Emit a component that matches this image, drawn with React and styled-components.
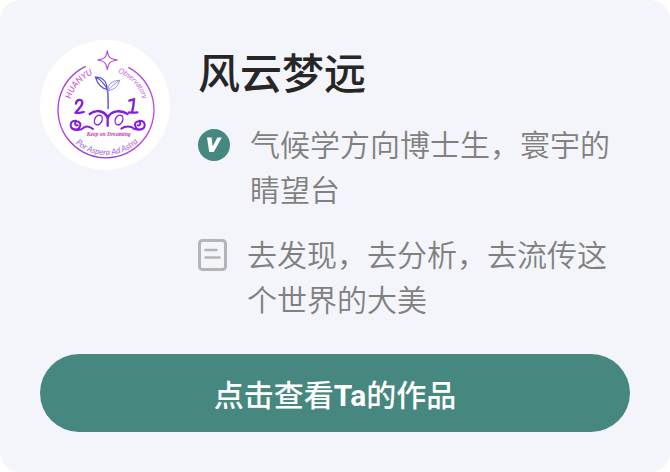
import styled, { createGlobalStyle } from 'styled-components';

const profile = {
    name: '风云梦远',
    title: '气候学方向博士生，寰宇的睛望台',
    bio: '去发现，去分析，去流传这个世界的大美',
};

export default function App(){
    return(
        <>
            <GlobalStyle/>
            <Card>
                <Profile>
                    <Avatar>
                        <Logo/>
                    </Avatar>
                    <Info>
                        <Name>{profile.name}</Name>
                        <Row>
                            <Verified/>
                            <Text>{profile.title}</Text>
                        </Row>
                        <Row>
                            <Note/>
                            <Text>{profile.bio}</Text>
                        </Row>
                    </Info>
                </Profile>
                <Button type="button">点击查看<b>Ta</b>的作品</Button>
            </Card>
        </>
    );
};

function Verified(){
    return(
        <Icon width="32" height="32" viewBox="0 0 32 32" aria-hidden="true">
            <circle cx="16" cy="16" r="16" fill="#46877f"/>
            <path d="M9 8.5h4.6l1 9L19.4 8.5h4.4l-8 14.5h-4.6z" fill="#fff"/>
        </Icon>
    );
}

function Note(){
    return(
        <Icon width="29" height="32" viewBox="0 0 29 32" fill="none" stroke="#b5b5b5" strokeWidth="3" strokeLinecap="round" aria-hidden="true">
            <rect x="1.5" y="1.5" width="26" height="29" rx="3"/>
            <path d="M7.5 11h11M7.5 18.5h14" strokeWidth="2.5"/>
        </Icon>
    );
}

function Logo(){
    return(
        <svg viewBox="12 12 390 390" fill="none" role="img" aria-label="HUANYU Observatory">
            <defs>
                <linearGradient id="ring" x1="0" y1="0" x2="1" y2="0">
                    <stop offset="0" stopColor="#b23ae0"/>
                    <stop offset=".5" stopColor="#8a3be8"/>
                    <stop offset="1" stopColor="#c04adf"/>
                </linearGradient>
                <linearGradient id="motto" x1="0" y1="0" x2="1" y2="0">
                    <stop offset="0" stopColor="#8a6cdd"/>
                    <stop offset="1" stopColor="#b55be0"/>
                </linearGradient>
                <path id="leftArc" d="M105 190A106 106 0 0 1 190 110"/>
                <path id="rightArc" d="M246 110A116 116 0 0 1 324 204"/>
                <path id="bottomArc" d="M119 322A138 138 0 0 0 318 306"/>
            </defs>
            {/* ring and star */}
            <path d="M149 91A144 144 0 1 0 277 94" stroke="url(#ring)" strokeWidth="4"/>
            <path d="M214 43C216 63 221 70 245 72C221 75 217 82 214 102C211 82 207 75 184 72C207 70 211 63 214 43Z" stroke="#b451d4" strokeWidth="3.5"/>
            {/* sprout */}
            <path d="M216 219C217 199 217 180 214 160" stroke="#7567dd" strokeWidth="5"/>
            <path d="M214 160C202 159 187 149 178 123C199 123 212 137 214 160ZM178 123C197 132 206 145 214 160" stroke="#5a4bd6" strokeWidth="3.5"/>
            <path d="M216 164C215 145 227 134 251 133C246 151 235 161 216 164ZM251 133C236 143 226 151 216 164" stroke="#958bdd" strokeWidth="3"/>
            {/* 2 0 v 0 1 */}
            <g stroke="#861ddd" strokeLinecap="round">
                <path d="M120 203C121 190 137 187 139 199C140 210 125 220 119 230Q131 232 143 228" strokeWidth="7"/>
                <path d="M280 194L294 190Q293 210 288 229M279 229Q292 231 304 229" strokeWidth="7"/>
                <path d="M161 234C177 221 205 221 215 246C226 221 256 222 275 234M215 240V269" strokeWidth="7"/>
                <ellipse cx="187" cy="252" rx="11" ry="15" transform="rotate(25 187 252)" strokeWidth="4"/>
                <ellipse cx="249" cy="252" rx="11" ry="15" transform="rotate(25 249 252)" strokeWidth="4"/>
                <path d="M125 268C113 270 116 253 127 257C139 263 131 283 116 280C98 276 101 253 120 254M104 268C105 284 132 287 144 274C154 269 163 273 171 279" strokeWidth="6"/>
                <path d="M305 268C317 270 314 253 303 257C291 263 299 283 314 280C332 276 329 253 310 254M326 268C324 284 300 286 286 273C274 269 264 272 256 278" strokeWidth="6"/>
            </g>
            <Lettering fontSize="26" fill="#cc43cb">
                <textPath href="#leftArc">HUANYU</textPath>
            </Lettering>
            <Lettering fontSize="22" fill="#cb5bd7">
                <textPath href="#rightArc">Observatory</textPath>
            </Lettering>
            <Lettering fontSize="25" fill="url(#motto)">
                <textPath href="#bottomArc">Por Aspera Ad Astra</textPath>
            </Lettering>
            <Slogan x="218" y="300" textAnchor="middle">Keep on Dreaming</Slogan>
        </svg>
    );
}

const GlobalStyle = createGlobalStyle`
    * {
        box-sizing: border-box;
    }

    body {
        margin: 0;
        background-color: #fff;
        font-family: 'Noto Sans CJK SC', sans-serif;
    }
`
const Card = styled.main`
    padding: 40px;
    background-color: #f4f5fa;
    border-radius: 20px;
`
const Profile = styled.section`
    display: flex;
    gap: 28px;
`
const Avatar = styled.div`
    flex: none;
    width: 130px;
    height: 130px;
    border-radius: 50%;
    background-color: #fff;
    overflow: hidden;
`
const Info = styled.div`
    flex: 1;
    min-width: 0;
    display: flex;
    flex-direction: column;
    gap: 20px;
`
const Name = styled.h1`
    margin: 0;
    font-size: 42px;
    line-height: 61px;
    font-weight: 500;
    color: #262626;
`
const Row = styled.div`
    display: flex;
    align-items: flex-start;
    gap: 20px;
`
const Icon = styled.svg`
    flex: none;
    margin-top: 8px;
`
const Text = styled.p`
    margin: 0;
    font-size: 30px;
    line-height: 45px;
    font-weight: 350;
    color: #808080;
`
const Button = styled.button`
    display: block;
    width: 100%;
    height: 78px;
    margin-top: 33px;
    border: none;
    border-radius: 39px;
    background-color: #46877f;
    color: #fff;
    font-family: Roboto, 'Noto Sans CJK SC', sans-serif;
    font-size: 30px;
    font-weight: 500;
    cursor: pointer;

    b {
        font-weight: 700;
    }
`
const Lettering = styled.text`
    font-family: Lato, sans-serif;
    font-style: italic;
`
const Slogan = styled.text`
    font-family: 'Liberation Serif', serif;
    font-size: 17px;
    font-style: italic;
    font-weight: 700;
    fill: #cc30ad;
`
